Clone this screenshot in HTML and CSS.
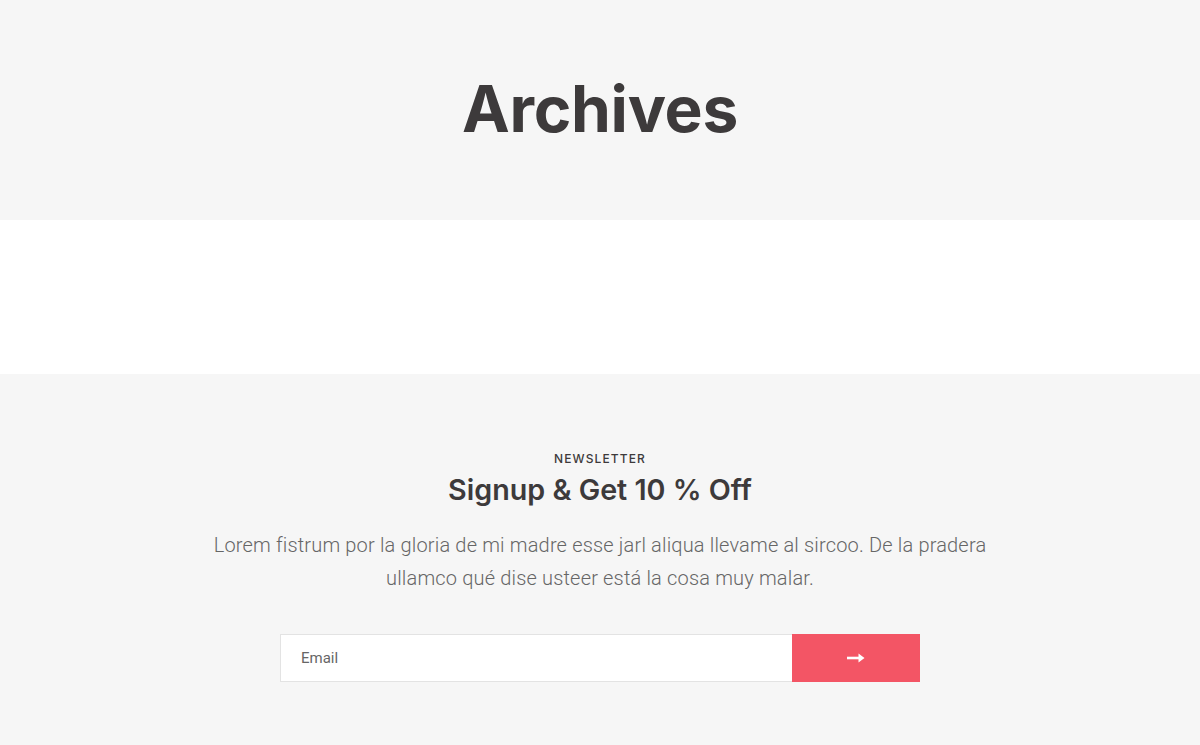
FILE: index.html
```html
<!DOCTYPE html>
<html lang="en">
<head>
  <meta charset="UTF-8" />
  <meta name="viewport" content="width=device-width, initial-scale=1.0"/>
  <title>Archives</title>
  <link rel="stylesheet" href="styles.css">
</head>
<body>

  <!-- Page title -->
  <div class="page-title">
    <h1>Archives</h1>
  </div>

  <!-- Empty content area -->
  <div class="content"></div>

  <!-- Newsletter -->
  <div class="newsletter">
    <span class="label">Newsletter</span>
    <h2>Signup &amp; Get 10 % Off</h2>
    <p>Lorem fistrum por la gloria de mi madre esse jarl aliqua llevame al sircoo. De la pradera ullamco qué dise usteer está la cosa muy malar.</p>
    <form class="signup" onsubmit="return false">
      <input type="email" placeholder="Email" />
      <button type="submit" aria-label="Subscribe">
        <svg width="20" height="12" viewBox="0 0 20 12">
          <path d="M1 6h15" stroke="#fff" stroke-width="2.6" fill="none"/>
          <path d="M12.5 1.5L18.5 6l-6 4.5z" fill="#fff"/>
        </svg>
      </button>
    </form>
  </div>

</body>
</html>
```

FILE: styles.css
```css
body {
  margin: 0;
  padding: 0;
  font-family: Roboto, 'Liberation Sans', sans-serif;
  background-color: #fff;
  color: #3d3a3b;
}

.page-title {
  height: 220px;
  background-color: #f6f6f6;
  display: flex;
  justify-content: center;
  align-items: center;
}

.page-title h1 {
  margin: 0 0 4px;
  font-family: Inter, 'Noto Sans', sans-serif;
  font-size: 64px;
  font-weight: 700;
  letter-spacing: -0.3px;
  color: #3d3a3b;
}

.content {
  height: 154px;
}

.newsletter {
  background-color: #f6f6f6;
  height: 371px;
  box-sizing: border-box;
  padding-top: 77px;
  display: flex;
  flex-direction: column;
  align-items: center;
  text-align: center;
}

.newsletter .label {
  font-family: Inter, 'Noto Sans', sans-serif;
  font-size: 12px;
  font-weight: 500;
  letter-spacing: 1.1px;
  text-transform: uppercase;
  color: #3d3a3b;
  line-height: 16px;
}

.newsletter h2 {
  margin: 5px 0 0;
  font-family: Inter, 'Noto Sans', sans-serif;
  font-size: 28.7px;
  font-weight: 600;
  line-height: 36px;
  color: #3d3a3b;
}

.newsletter p {
  margin: 21px 0 0;
  width: 800px;
  font-size: 20px;
  font-weight: 300;
  letter-spacing: 0.17px;
  line-height: 33px;
  color: #666;
}

.signup {
  margin-top: 39px;
  display: flex;
  width: 640px;
  height: 48px;
}

.signup input {
  flex-grow: 1;
  border: 1px solid #e3e3e3;
  border-right: none;
  background-color: #fff;
  padding: 0 20px;
  font-family: Roboto, sans-serif;
  font-size: 15px;
  color: #555;
  outline: none;
}

.signup input::placeholder {
  color: #666;
}

.signup button {
  width: 128px;
  border: none;
  background-color: #f35565;
  display: flex;
  justify-content: center;
  align-items: center;
  cursor: pointer;
}
```
